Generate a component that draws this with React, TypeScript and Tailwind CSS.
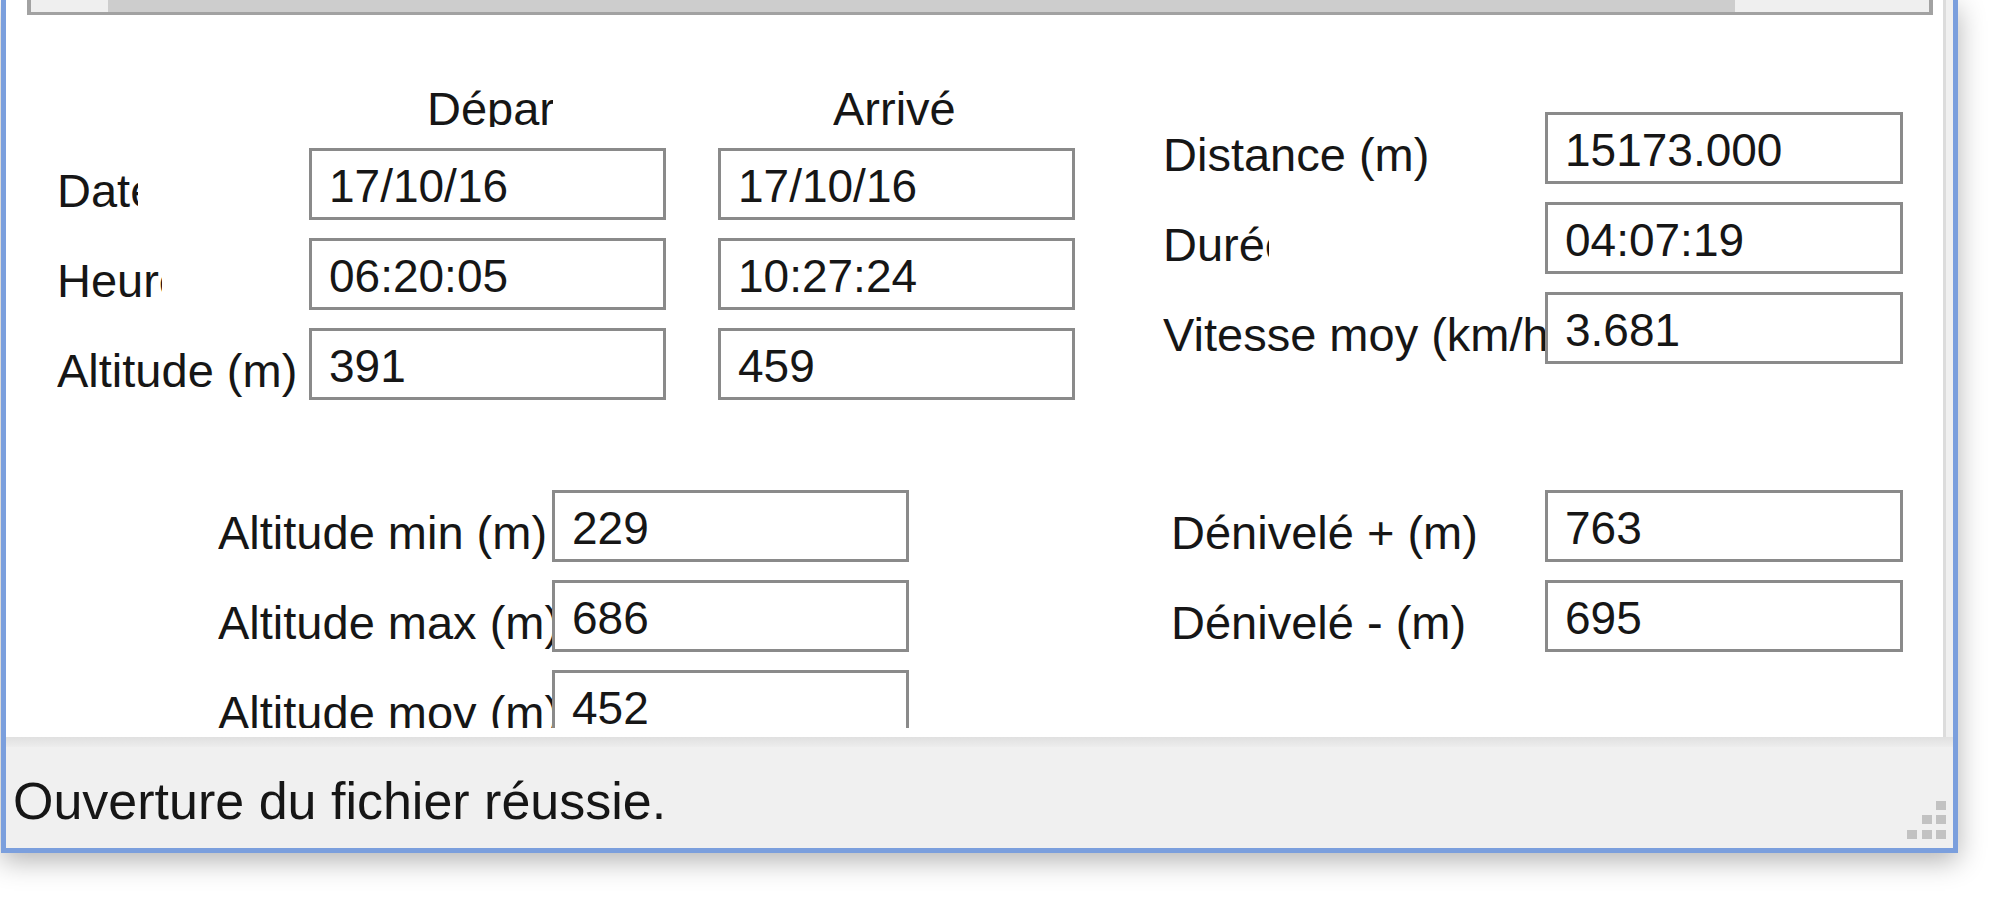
import React from 'react';

const font = { fontFamily: '"Liberation Sans", Arial, sans-serif' };

interface FieldProps {
  label: string;
  labelWidth: string;
  value: string;
  boxWidth: string;
}

// a WinForms-like label + textbox row; the label is clipped to its box
const Field: React.FC<FieldProps> = ({ label, labelWidth, value, boxWidth }) => (
  <div className="flex h-[72px]">
    <div className={`${labelWidth} h-[72px] overflow-hidden whitespace-nowrap pt-[16px] text-[47px] leading-[54px] text-[#161616]`}>
      {label}
    </div>
    <TextBox value={value} width={boxWidth} />
  </div>
);

const TextBox: React.FC<{ value: string; width: string }> = ({ value, width }) => (
  <div className={`${width} h-[72px] shrink-0 border-[3px] border-[#8a8a8a] bg-white pl-[17px] pt-[9px] text-[46px] leading-[53px] text-[#161616] whitespace-nowrap overflow-hidden`}>
    {value}
  </div>
);

const ResizeGrip = () => (
  <svg width="40" height="40" viewBox="0 0 40 40" className="shrink-0 self-end mb-[7px] mr-[6px]">
    <rect x="29" y="0" width="10" height="9" fill="#c2c2c2" />
    <rect x="15" y="14" width="10" height="9" fill="#c2c2c2" />
    <rect x="29" y="14" width="10" height="9" fill="#c2c2c2" />
    <rect x="0" y="29" width="10" height="9" fill="#c2c2c2" />
    <rect x="15" y="29" width="10" height="9" fill="#c2c2c2" />
    <rect x="29" y="29" width="10" height="9" fill="#c2c2c2" />
  </svg>
);

export default function App() {
  return (
    <div className="w-[2000px] h-[898px] bg-white overflow-hidden" style={font}>
      <div className="ml-px w-[1957px] h-[853px] border-l-[5px] border-r-[5px] border-b-[5px] border-[#7b9fdd] bg-[#f0f0f0] flex flex-col shadow-[0_8px_26px_rgba(0,0,0,0.3)]">
        {/* white client area */}
        <div className="mr-[7px] h-[737px] shrink-0 bg-white border-r-[3px] border-[#dcdcdc] flex flex-col">
          {/* bottom of the scrollbar frame above */}
          <div className="ml-[21px] w-[1906px] h-[15px] shrink-0 border-l-[4px] border-r-[4px] border-b-[3px] border-[#a2a2a2] flex">
            <div className="w-[77px] bg-[#efefef]" />
            <div className="w-[1627px] bg-[#cdcdcd]" />
            <div className="flex-1 bg-[#efefef]" />
          </div>

          <div className="h-[713px] overflow-hidden flex flex-col">
            {/* upper block */}
            <div className="flex">
              <div className="ml-[51px] pt-[67px] flex flex-col">
                <div className="flex h-[45px]">
                  <div className="ml-[370px] w-[126px] h-[45px] overflow-hidden whitespace-nowrap text-[47px] leading-[53px] text-[#161616]">Départ</div>
                  <div className="ml-[280px] w-[123px] h-[45px] overflow-hidden whitespace-nowrap text-[47px] leading-[53px] text-[#161616]">Arrivée</div>
                </div>
                <div className="mt-[21px] flex flex-col gap-[18px]">
                  {[
                    ['Date', 'w-[81px] mr-[171px]', '17/10/16', '17/10/16'],
                    ['Heure', 'w-[105px] mr-[147px]', '06:20:05', '10:27:24'],
                    ['Altitude (m)', 'w-[252px]', '391', '459'],
                  ].map(([label, lw, a, b]) => (
                    <div key={label} className="flex h-[72px]">
                      <div className={`${lw} h-[72px] overflow-hidden whitespace-nowrap pt-[16px] text-[47px] leading-[54px] text-[#161616]`}>
                        {label}
                      </div>
                      <TextBox value={a} width="w-[357px]" />
                      <div className="w-[52px]" />
                      <TextBox value={b} width="w-[357px]" />
                    </div>
                  ))}
                </div>
              </div>

              <div className="ml-[88px] pt-[97px] flex flex-col gap-[18px]">
                <Field label="Distance (m)" labelWidth="w-[382px]" value="15173.000" boxWidth="w-[358px]" />
                <div className="flex h-[72px]">
                  <div className="w-[106px] mr-[276px] h-[72px] overflow-hidden whitespace-nowrap pt-[16px] text-[47px] leading-[54px] text-[#161616]">Durée</div>
                  <TextBox value="04:07:19" width="w-[358px]" />
                </div>
                <Field label="Vitesse moy (km/h)" labelWidth="w-[382px]" value="3.681" boxWidth="w-[358px]" />
              </div>
            </div>

            {/* lower block */}
            <div className="mt-[90px] flex">
              <div className="ml-[212px] flex flex-col gap-[18px]">
                <Field label="Altitude min (m)" labelWidth="w-[334px]" value="229" boxWidth="w-[357px]" />
                <Field label="Altitude max (m)" labelWidth="w-[334px]" value="686" boxWidth="w-[357px]" />
                <Field label="Altitude moy (m)" labelWidth="w-[334px]" value="452" boxWidth="w-[357px]" />
              </div>
              <div className="ml-[262px] flex flex-col gap-[18px]">
                <Field label="Dénivelé + (m)" labelWidth="w-[374px]" value="763" boxWidth="w-[358px]" />
                <Field label="Dénivelé - (m)" labelWidth="w-[374px]" value="695" boxWidth="w-[358px]" />
              </div>
            </div>
          </div>
        </div>

        {/* separator */}
        <div className="h-[10px] shrink-0 bg-gradient-to-b from-[#e0e0e0] to-[#ededed]" />

        {/* status bar */}
        <div className="flex-1 flex justify-between">
          <div className="pl-[7px] pt-[24px] text-[52px] leading-[60px] text-[#161616] whitespace-nowrap">
            Ouverture du fichier réussie.
          </div>
          <ResizeGrip />
        </div>
      </div>
    </div>
  );
}
